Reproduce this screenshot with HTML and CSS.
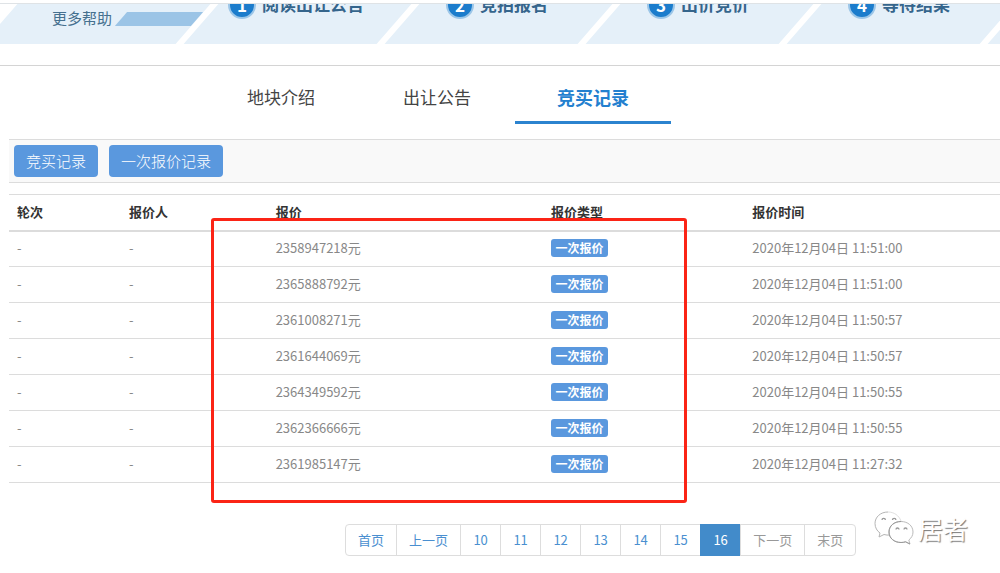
FILE: index.html
```html
<!DOCTYPE html>
<html lang="zh-CN">
<head>
<meta charset="utf-8">
<meta name="viewport" content="width=device-width, initial-scale=1">
<title>竞买记录</title>
<link rel="stylesheet" href="styles.css">
</head>
<body>
<header class="banner">
  <ol class="steps">
    <li class="step step-help"><a class="help-link" href="#">更多帮助</a><span class="help-bar"></span></li>
    <li class="step"><span class="step-num">1</span><span class="step-label">阅读出让公告</span></li>
    <li class="step"><span class="step-num">2</span><span class="step-label">竞拍报名</span></li>
    <li class="step"><span class="step-num">3</span><span class="step-label">出价竞价</span></li>
    <li class="step"><span class="step-num">4</span><span class="step-label">等待结果</span></li>
    <li class="step"></li>
  </ol>
</header>
<nav class="tabs">
  <a class="tab" href="#">地块介绍</a>
  <a class="tab" href="#">出让公告</a>
  <a class="tab tab-active" href="#">竞买记录</a>
</nav>
<main class="content">
  <div class="toolbar">
    <button class="btn" type="button">竞买记录</button>
    <button class="btn" type="button">一次报价记录</button>
  </div>
  <div class="records">
    <table class="bids">
      <colgroup><col class="col-round"><col class="col-bidder"><col class="col-price"><col class="col-type"><col></colgroup>
      <thead>
        <tr><th>轮次</th><th>报价人</th><th>报价</th><th>报价类型</th><th>报价时间</th></tr>
      </thead>
      <tbody>
        <tr><td>-</td><td>-</td><td>2358947218元</td><td><span class="badge">一次报价</span></td><td>2020年12月04日 11:51:00</td></tr>
        <tr><td>-</td><td>-</td><td>2365888792元</td><td><span class="badge">一次报价</span></td><td>2020年12月04日 11:51:00</td></tr>
        <tr><td>-</td><td>-</td><td>2361008271元</td><td><span class="badge">一次报价</span></td><td>2020年12月04日 11:50:57</td></tr>
        <tr><td>-</td><td>-</td><td>2361644069元</td><td><span class="badge">一次报价</span></td><td>2020年12月04日 11:50:57</td></tr>
        <tr><td>-</td><td>-</td><td>2364349592元</td><td><span class="badge">一次报价</span></td><td>2020年12月04日 11:50:55</td></tr>
        <tr><td>-</td><td>-</td><td>2362366666元</td><td><span class="badge">一次报价</span></td><td>2020年12月04日 11:50:55</td></tr>
        <tr><td>-</td><td>-</td><td>2361985147元</td><td><span class="badge">一次报价</span></td><td>2020年12月04日 11:27:32</td></tr>
      </tbody>
    </table>
    <div class="highlight"></div>
  </div>
  <footer class="pager-row">
    <nav class="pager">
      <a class="page" href="#">首页</a>
      <a class="page" href="#">上一页</a>
      <a class="page" href="#">10</a>
      <a class="page" href="#">11</a>
      <a class="page" href="#">12</a>
      <a class="page" href="#">13</a>
      <a class="page" href="#">14</a>
      <a class="page" href="#">15</a>
      <a class="page page-current" href="#">16</a>
      <a class="page page-off" href="#">下一页</a>
      <a class="page page-off" href="#">末页</a>
    </nav>
    <div class="watermark">
      <svg class="wechat" viewBox="0 0 40 34" width="40" height="34" aria-hidden="true">
        <g fill="#fff" stroke-linejoin="round">
          <path d="M14 1C6.500 1 1 6 1 12.500c0 4 2 7.500 5 9.500L5 26l5-2.500c2 .6 4 .8 6 .5" stroke="#b5b5b5" stroke-width="1"/>
          <path d="M14 1c6 0 11 3.500 13 9" fill="none" stroke="#e0e0e0"/>
          <path d="M27 10.500c-7 0-12 4.500-12 10.500s5 10.500 12 10.500c1.700 0 3-.2 4.500-.7L36 33l-1.200-4c2.700-2 4.200-4.800 4.200-8 0-6-5-10.500-12-10.500z" stroke="#bbb"/>
          <path d="M15 21c0-6 5-10.500 12-10.500M15 21c0 6 5 10.500 12 10.500 1.700 0 3-.2 4.500-.7L36 33" fill="none" stroke="#999"/>
        </g>
        <g fill="none" stroke="#999" stroke-width="1.300">
          <path d="M8 9a1.700 1.700 0 0 1 3.400 0M18.500 9a1.700 1.700 0 0 1 3.400 0M22 18.500a1.500 1.500 0 0 1 3 0M30 18.500a1.500 1.500 0 0 1 3 0"/>
        </g>
      </svg>
      <span class="watermark-name">居者</span>
    </div>
  </footer>
</main>
</body>
</html>
```
FILE: styles.css
```css
* { box-sizing: border-box; }

body {
  margin: 0;
  background: #fff;
  color: #888;
  font: 13px/20px "Noto Sans CJK SC", "Noto Sans", sans-serif;
}

a { text-decoration: none; }

/* Step banner */
.banner {
  margin-top: 3px;
  padding-bottom: 21px;
  border-bottom: 1px solid #d4d4d4;
}

.steps {
  display: flex;
  height: 41px;
  margin: 0;
  padding: 0;
  overflow: hidden;
  list-style: none;
  border-top: 1px solid #dfe3e6;
}

.step {
  position: relative;
  z-index: 0;
  display: flex;
  flex: 0 0 20.1%;
  justify-content: center;
  gap: 6px;
  padding-right: 11px;
}

.step::before {
  content: "";
  position: absolute;
  z-index: -1;
  inset: 0 8px 0 0;
  background: #e5f0f9;
  transform: skewX(-41deg);
}

.step-num {
  width: 28px;
  height: 28px;
  margin-top: -13px;
  border: 2px solid #9cc6e8;
  border-radius: 50%;
  background: #1b7ccc;
  color: #fff;
  font-size: 17px;
  font-weight: 700;
  line-height: 24px;
  text-align: center;
}

.step-label {
  margin-top: -12px;
  color: #35658c;
  font-size: 17px;
  font-weight: 700;
  line-height: 24px;
  white-space: nowrap;
}

.step-help {
  justify-content: flex-start;
  gap: 9px;
  padding: 4px 4px 0 52px;
}

.help-link {
  color: #45708f;
  font-size: 15px;
  white-space: nowrap;
}

.help-bar {
  flex: 1;
  height: 14px;
  margin-top: 4px;
  background: #9bc4e6;
  transform: skewX(-41deg);
}

/* Section tabs */
.tabs {
  display: flex;
  padding: 8px 0 15px 20.3%;
}

.tab {
  width: 156px;
  padding: 11px 0 12px;
  border-bottom: 3px solid transparent;
  color: #444;
  font-size: 17px;
  line-height: 24px;
  text-align: center;
}

.tab-active {
  border-bottom-color: #2b83cf;
  color: #2380cf;
  font-size: 18px;
  font-weight: 700;
}

/* Records */
.content { padding-left: 9px; }

.toolbar {
  display: flex;
  gap: 11px;
  padding: 5px 5px;
  border-top: 1px solid #dcdcdc;
  border-bottom: 1px solid #dcdcdc;
  background: #f9f9f9;
}

.btn {
  height: 32px;
  padding: 0 12px;
  border: 0;
  border-radius: 4px;
  background: #5a98de;
  color: #fff;
  font: 300 15px/30px "Noto Sans CJK SC", sans-serif;
}

.records {
  position: relative;
  margin-top: 11px;
}

.bids {
  width: 100%;
  border-collapse: collapse;
  table-layout: fixed;
}

.col-round { width: 11.3%; }
.col-bidder { width: 14.8%; }
.col-price { width: 27.8%; }
.col-type { width: 20.3%; }

.bids th,
.bids td {
  height: 36px;
  padding: 0 8px 1px;
  border-top: 1px solid #dcdcdc;
  border-bottom: 1px solid #dcdcdc;
  text-align: left;
}

.bids th {
  border-bottom: 2px solid #dcdcdc;
  color: #333;
}

.badge {
  display: block;
  width: 57px;
  border-radius: 3px;
  background: #5a98de;
  color: #fff;
  font-size: 12px;
  font-weight: 700;
  line-height: 18px;
  text-align: center;
}

/* Marker frame drawn over the price and type columns */
.highlight {
  position: absolute;
  top: 24px;
  bottom: -20px;
  left: 20.4%;
  width: 48%;
  border: 3px solid #fb2416;
  border-radius: 3px;
}

/* Pagination */
.pager-row {
  position: relative;
  display: flex;
  justify-content: center;
  padding: 41px 0 16px 19.4%;
}

.pager { display: flex; }

.page {
  min-width: 41px;
  padding: 5px 12px;
  border: 1px solid #ddd;
  color: #4a8fd0;
  text-align: center;
  white-space: nowrap;
}

.page + .page { margin-left: -1px; }
.page:first-child { border-radius: 4px 0 0 4px; }
.page:last-child { border-radius: 0 4px 4px 0; }

.page-current {
  border-color: #428bca;
  background: #428bca;
  color: #fff;
}

.page-off { color: #999; }

.watermark {
  position: absolute;
  top: 28px;
  right: 32px;
  display: flex;
  gap: 4px;
}

.watermark-name {
  color: #fff;
  font-size: 25px;
  line-height: 34px;
  text-shadow: 1px 1px 1px #777;
}
```
